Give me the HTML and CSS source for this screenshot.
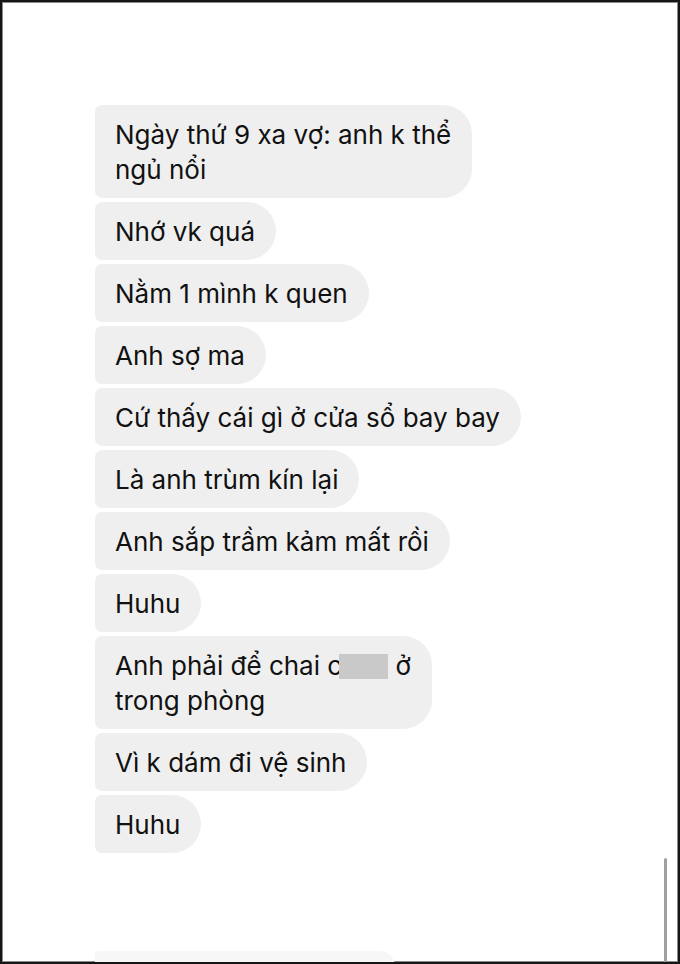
FILE: index.html
```html
<!DOCTYPE html>
<html lang="vi">
<head>
    <meta charset="UTF-8">
    <meta name="viewport" content="width=device-width, initial-scale=1.0">
    <title>Tin nhắn</title>
    <link rel="stylesheet" href="styles.css">
</head>
<body>
    <div class="frame">
        <div class="chat">
            <div class="bubble">Ngày thứ 9 xa vợ: anh k thể<br>ngủ nổi</div>
            <div class="bubble">Nhớ vk quá</div>
            <div class="bubble">Nằm 1 mình k quen</div>
            <div class="bubble">Anh sợ ma</div>
            <div class="bubble">Cứ thấy cái gì ở cửa sổ bay bay</div>
            <div class="bubble">Là anh trùm kín lại</div>
            <div class="bubble">Anh sắp trầm kảm mất rồi</div>
            <div class="bubble">Huhu</div>
            <div class="bubble">Anh phải để chai c<span class="blur"></span> ở<br>trong phòng</div>
            <div class="bubble">Vì k dám đi vệ sinh</div>
            <div class="bubble">Huhu</div>
        </div>

        <div class="ghost"></div>
        <div class="scrollbar"></div>
    </div>
</body>
</html>
```

FILE: styles.css
```css
* {
    box-sizing: border-box;
}
body {
    margin: 0;
    background: #fff;
    font-family: Inter, "Noto Sans", "Liberation Sans", sans-serif;
}
.frame {
    position: relative;
    width: 680px;
    height: 964px;
    border: 2px solid #151515;
    box-shadow: inset 0 0 0 1px #8a8a8a;
    overflow: hidden;
    background: #fff;
}
.chat {
    display: flex;
    flex-direction: column;
    align-items: flex-start;
    gap: 4px;
    padding: 103px 0 0 93px;
}
.bubble {
    background: #efefef;
    color: #111;
    font-size: 26px;
    line-height: 35px;
    padding: 12px 21px 11px 20px;
    border-radius: 7px 29px 29px 7px;
    white-space: nowrap;
}
.blur {
    display: inline-block;
    width: 49px;
    height: 25px;
    margin-left: -3px;
    vertical-align: -4px;
    background: #c9c9c9;
}
.ghost {
    width: 300px;
    height: 30px;
    margin: 98px 0 0 93px;
    border-radius: 7px 29px 29px 7px;
    background: #f7f7f7;
}
.scrollbar {
    position: absolute;
    right: 11px;
    top: 856px;
    width: 3px;
    height: 110px;
    border-radius: 2px;
    background: #a0a0a0;
}
```
